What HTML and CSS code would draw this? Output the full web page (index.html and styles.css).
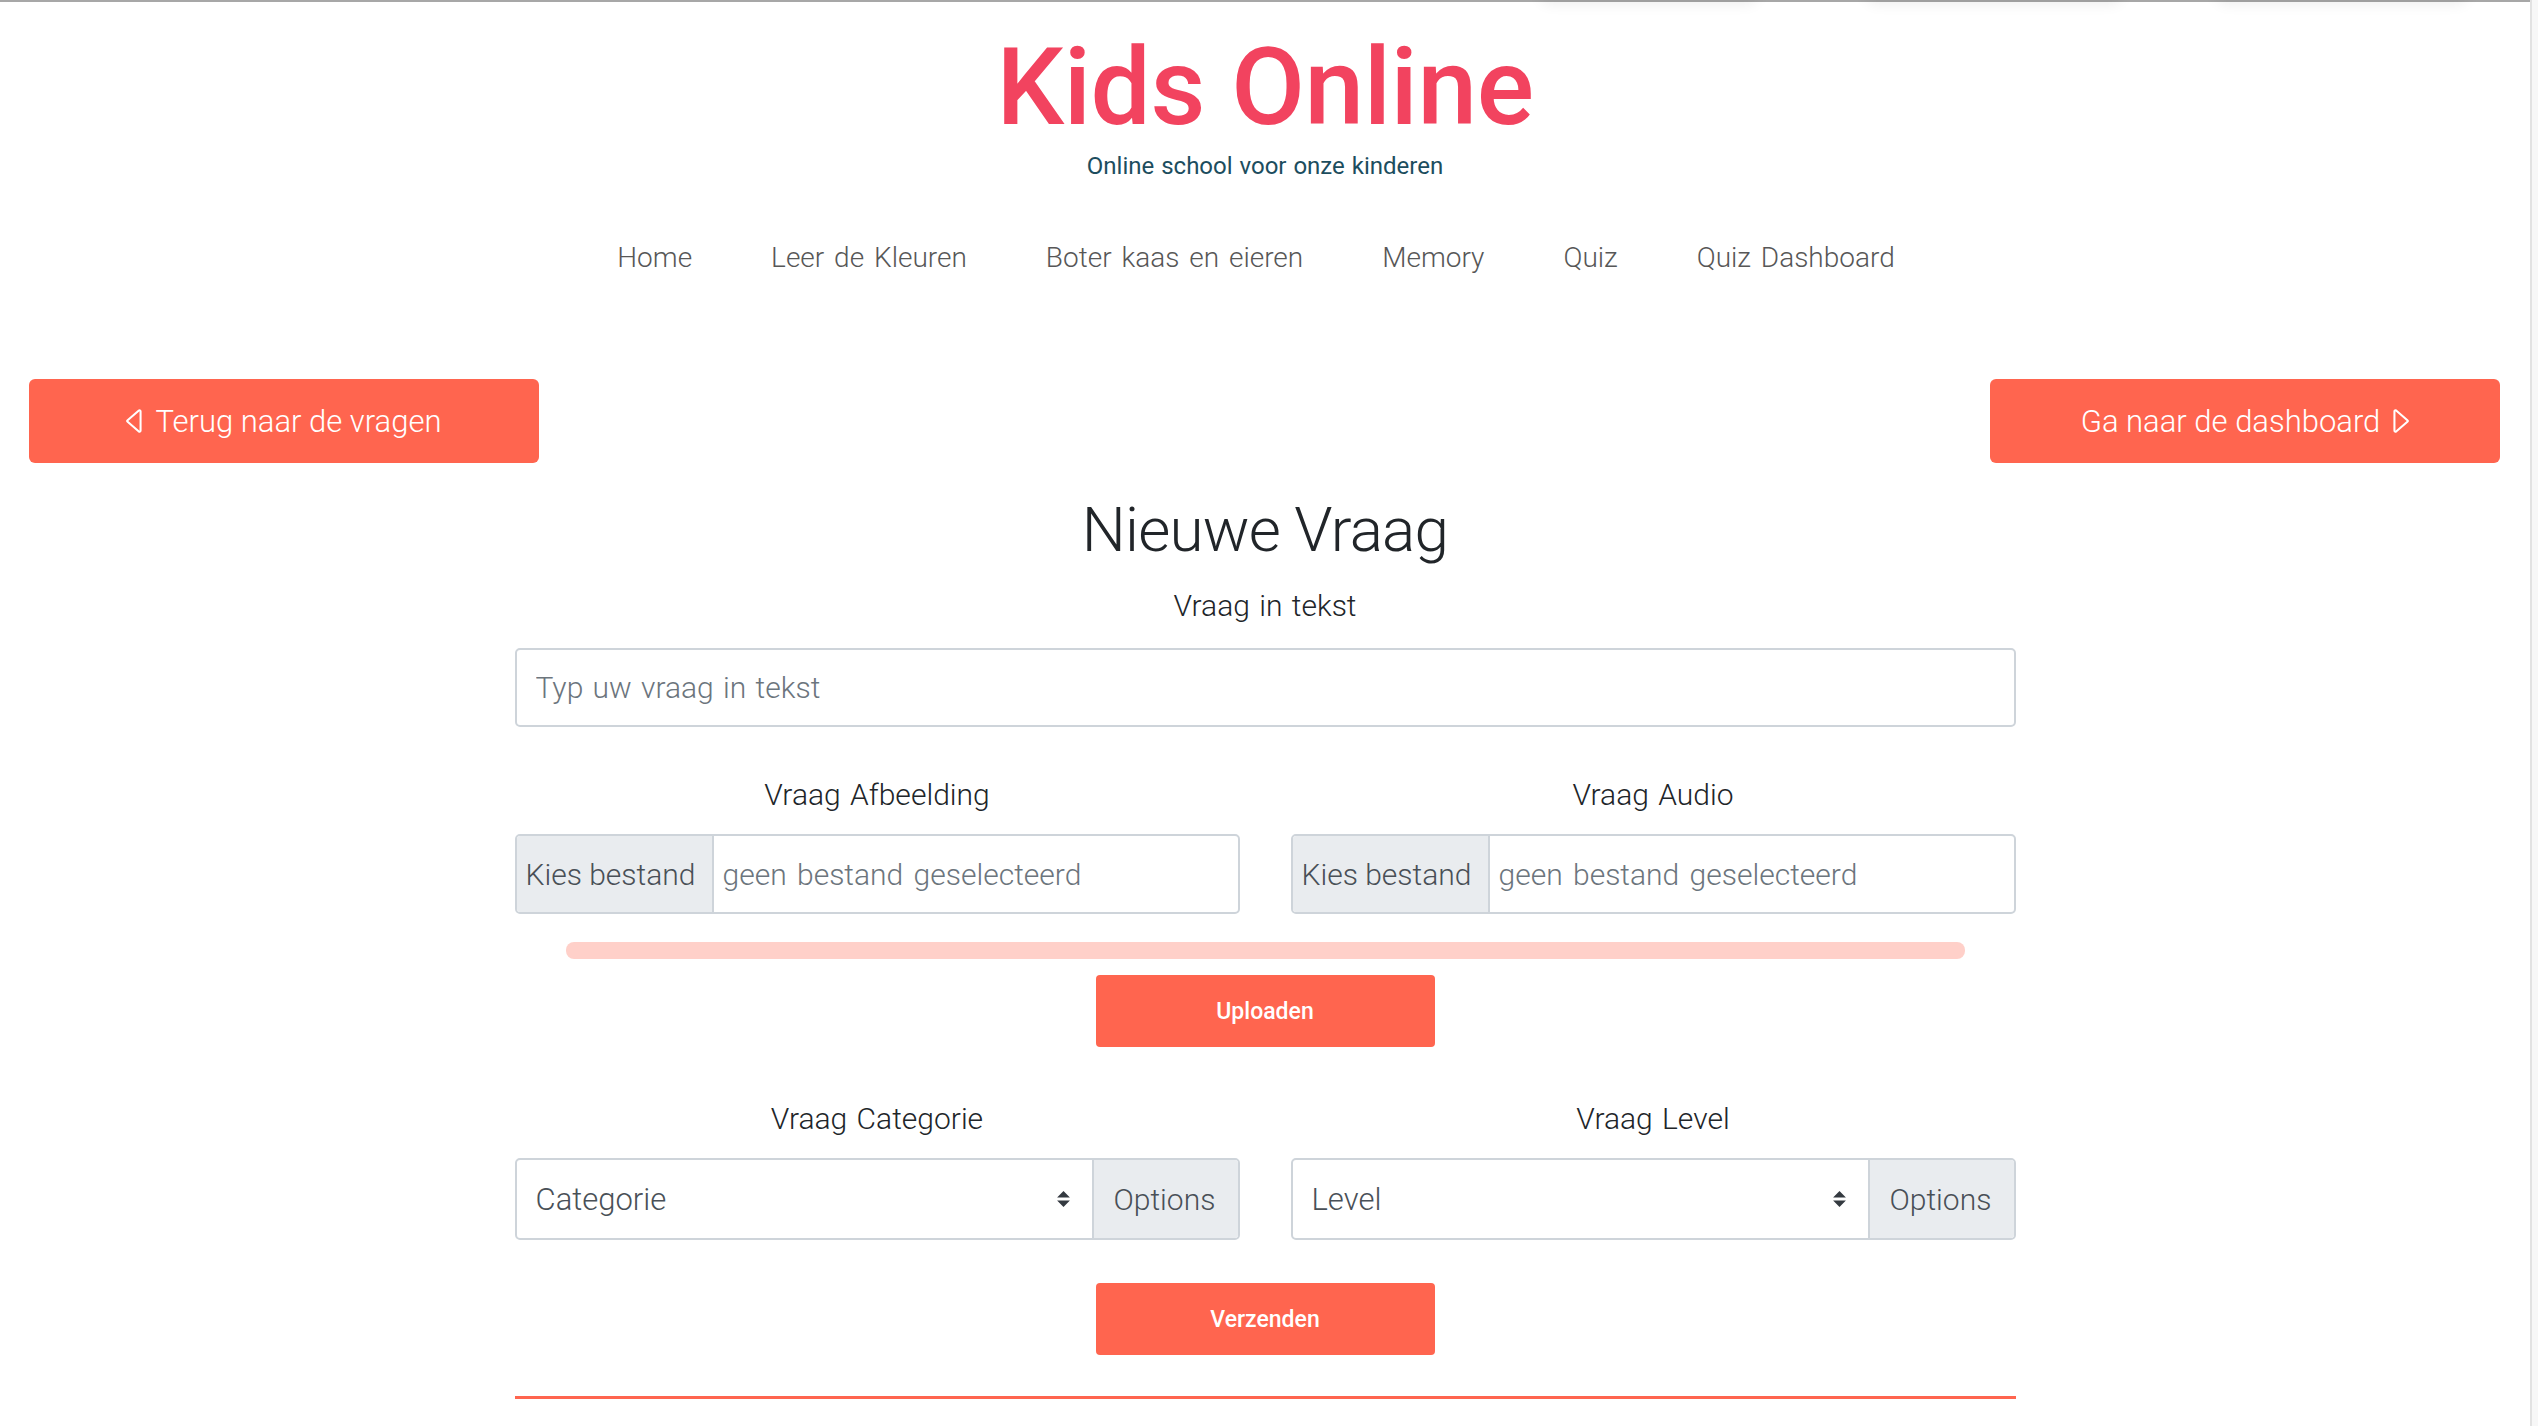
FILE: index.html
```html
<!DOCTYPE html>
<html lang="nl">
<head>
<meta charset="utf-8">
<title>Kids Online - Nieuwe Vraag</title>
<link rel="stylesheet" href="styles.css">
</head>
<body>
<div class="top-shadows" aria-hidden="true">
  <span class="shade shade-1"></span>
  <span class="shade shade-2"></span>
  <span class="shade shade-3"></span>
</div>
<div class="scroll-track" aria-hidden="true"></div>

<header class="site-header">
  <h1 class="brand">Kids Online</h1>
  <p class="tagline">Online school voor onze kinderen</p>
  <nav class="main-nav">
    <a href="#">Home</a>
    <a href="#">Leer de Kleuren</a>
    <a href="#">Boter kaas en eieren</a>
    <a href="#">Memory</a>
    <a href="#">Quiz</a>
    <a href="#">Quiz Dashboard</a>
  </nav>
</header>

<main class="page">
  <div class="action-row">
    <a class="btn btn-lg" href="#">
      <svg class="caret" viewBox="3.4 2.1 7.8 11.8" preserveAspectRatio="none" aria-hidden="true"><path fill="currentColor" d="M10 12.796V3.204L4.519 8 10 12.796zm-.659.753-5.48-4.796a1 1 0 0 1 0-1.506l5.48-4.796A1 1 0 0 1 11 3.204v9.592a1 1 0 0 1-1.659.753z"/></svg>
      <span>Terug naar de vragen</span>
    </a>
    <a class="btn btn-lg" href="#">
      <span>Ga naar de dashboard</span>
      <svg class="caret" viewBox="4.8 2.1 7.8 11.8" preserveAspectRatio="none" aria-hidden="true"><path fill="currentColor" d="M6 12.796V3.204L11.481 8 6 12.796zm.659.753 5.48-4.796a1 1 0 0 0 0-1.506L6.66 2.451C6.011 1.885 5 2.345 5 3.204v9.592a1 1 0 0 0 1.659.753z"/></svg>
    </a>
  </div>

  <form class="question-form" onsubmit="return false">
    <h2 class="form-title">Nieuwe Vraag</h2>
    <label class="field-label" for="vraag">Vraag in tekst</label>
    <input id="vraag" class="text-input" type="text" placeholder="Typ uw vraag in tekst">

    <div class="two-col">
      <div class="col">
        <div class="field-label">Vraag Afbeelding</div>
        <div class="file-group">
          <span class="addon addon-left">Kies bestand</span>
          <span class="file-name">geen bestand geselecteerd</span>
        </div>
      </div>
      <div class="col">
        <div class="field-label">Vraag Audio</div>
        <div class="file-group">
          <span class="addon addon-left">Kies bestand</span>
          <span class="file-name">geen bestand geselecteerd</span>
        </div>
      </div>
    </div>

    <div class="progress"></div>
    <button class="btn btn-sm btn-upload" type="button">Uploaden</button>

    <div class="two-col select-row">
      <div class="col">
        <div class="field-label">Vraag Categorie</div>
        <div class="select-group">
          <div class="select-box">
            <span>Categorie</span>
            <svg class="select-arrows" viewBox="0 0 4 5" aria-hidden="true"><path fill="#343a40" d="M2 0L0 2h4zm0 5L0 3h4z"/></svg>
          </div>
          <span class="addon addon-right">Options</span>
        </div>
      </div>
      <div class="col">
        <div class="field-label">Vraag Level</div>
        <div class="select-group">
          <div class="select-box">
            <span>Level</span>
            <svg class="select-arrows" viewBox="0 0 4 5" aria-hidden="true"><path fill="#343a40" d="M2 0L0 2h4zm0 5L0 3h4z"/></svg>
          </div>
          <span class="addon addon-right">Options</span>
        </div>
      </div>
    </div>

    <button class="btn btn-sm btn-send" type="submit">Verzenden</button>
    <hr class="rule">
  </form>
</main>
</body>
</html>
```

FILE: styles.css
```css
* { box-sizing: border-box; }

html, body { height: 100%; }

body {
  margin: 0;
  padding-right: 8px;
  border-top: 2px solid #a7a7a7;
  background: #ffffff;
  font-family: Roboto, "Liberation Sans", Arial, sans-serif;
  color: #212529;
  overflow: hidden;
}

/* faint shadows of items above the viewport */
.top-shadows { position: absolute; top: 0; left: 0; width: 100%; height: 0; }
.shade {
  position: absolute;
  top: -34px;
  height: 34px;
  border-radius: 10px;
  background: #fff;
  box-shadow: 0 4px 14px rgba(0, 0, 0, 0.07);
}
.shade-1 { left: 1540px; width: 218px; }
.shade-2 { left: 1866px; width: 256px; }
.shade-3 { left: 2216px; width: 252px; }

.scroll-track {
  position: fixed;
  top: 0;
  right: 0;
  bottom: 0;
  width: 8px;
  background: #f7f7f7;
  border-left: 2px solid #e2e2e2;
}

/* header */
.site-header { text-align: center; }

.brand {
  margin: 32px 0 0;
  font-size: 107px;
  line-height: 107px;
  font-weight: 500;
  letter-spacing: -0.4px;
  color: #f2435f;
}

.tagline {
  margin: 13px 0 0;
  font-size: 24px;
  line-height: 24px;
  font-weight: 400;
  word-spacing: 1px;
  color: #1c4d5e;
}

.main-nav {
  margin-top: 66px;
  display: flex;
  justify-content: center;
  gap: 79px;
  padding-right: 18px;
  font-size: 28px;
  line-height: 28px;
  font-weight: 300;
  word-spacing: 3px;
}
.main-nav a { color: #575757; text-decoration: none; }

/* buttons */
.btn {
  display: flex;
  align-items: center;
  justify-content: center;
  border: 0;
  background: #ff654f;
  color: #fff;
  text-decoration: none;
  font-family: inherit;
  cursor: pointer;
}

.action-row {
  margin-top: 107px;
  display: flex;
  justify-content: space-between;
  padding: 0 30px 0 29px;
}

.btn-lg {
  width: 510px;
  height: 84px;
  border-radius: 6px;
  gap: 13px;
  font-size: 31px;
  line-height: 31px;
  font-weight: 300;
}

.caret { width: 16px; height: 24px; display: block; }

.btn-sm {
  width: 339px;
  height: 72px;
  border-radius: 4px;
  font-size: 23px;
  line-height: 23px;
  font-weight: 500;
}

/* form */
.question-form {
  width: 1501px;
  margin: 0 auto;
  display: flex;
  flex-direction: column;
  align-items: center;
}

.form-title {
  margin: 36px 0 0;
  font-size: 62px;
  line-height: 62px;
  font-weight: 300;
  letter-spacing: -0.8px;
  color: #212529;
}

.field-label {
  display: block;
  margin-top: 30px;
  font-size: 30px;
  line-height: 30px;
  font-weight: 300;
  word-spacing: 2px;
  text-align: center;
  color: #212529;
}

.text-input {
  margin-top: 27px;
  width: 100%;
  height: 79px;
  padding: 0 19px;
  border: 2px solid #ced4da;
  border-radius: 5px;
  font-family: inherit;
  font-size: 30px;
  font-weight: 300;
  word-spacing: 2px;
  color: #495057;
  outline: none;
}
.text-input::placeholder { color: #6c757d; }

.two-col {
  width: 100%;
  display: grid;
  grid-template-columns: 1fr 1fr;
  column-gap: 51px;
}
.two-col .field-label { margin-top: 53px; }

.file-group,
.select-group {
  margin-top: 24px;
  display: flex;
  border: 2px solid #ced4da;
  border-radius: 5px;
  overflow: hidden;
  font-size: 30px;
  font-weight: 300;
  color: #495057;
}
.file-group { height: 80px; }
.select-group { height: 82px; }

.addon {
  display: flex;
  align-items: center;
  background: #e9ecef;
  color: #495057;
}
.addon-left { width: 197px; padding-left: 9px; border-right: 2px solid #ced4da; }
.addon-right { width: 146px; padding-left: 20px; border-left: 2px solid #ced4da; }

.file-name {
  flex: 1;
  display: flex;
  align-items: center;
  padding-left: 9px;
  color: #6c757d;
  word-spacing: 3px;
}

.select-box {
  flex: 1;
  display: flex;
  align-items: center;
  justify-content: space-between;
  padding: 0 22px 0 19px;
  font-size: 31px;
  color: #495057;
}
.select-arrows { width: 13px; height: 16px; display: block; }

.progress {
  margin-top: 28px;
  width: 1399px;
  height: 17px;
  border-radius: 8px;
  background: #ffd0c9;
}

.btn-upload { margin-top: 16px; }

.select-row .field-label { margin-top: 57px; }

.btn-send { margin-top: 43px; }

.rule {
  margin: 41px 0 0;
  width: 100%;
  height: 3px;
  border: 0;
  background: #ff654f;
}
```
